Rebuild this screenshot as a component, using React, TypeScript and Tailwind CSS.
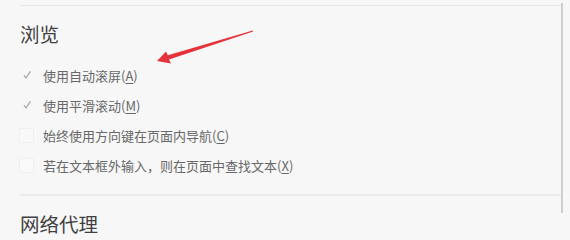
import React from 'react';

type Option = {
  label: string;
  key: string;
  checked: boolean;
};

const options: Option[] = [
  { label: '使用自动滚屏', key: 'A', checked: true },
  { label: '使用平滑滚动', key: 'M', checked: true },
  { label: '始终使用方向键在页面内导航', key: 'C', checked: false },
  { label: '若在文本框外输入，则在页面中查找文本', key: 'X', checked: false },
];

function CheckMark() {
  return (
    <svg width="14" height="14" viewBox="0 0 14 14" fill="none">
      <path d="M4.2 7.6 L6 10 L10.2 3.6" stroke="#a0a0a0" strokeWidth="1.1" strokeLinecap="round" strokeLinejoin="round" />
    </svg>
  );
}

function OptionRow({ option }: { option: Option }) {
  return (
    <label className="flex h-[30px] items-center">
      {option.checked ? (
        <span className="flex h-[14px] w-[14px] items-center justify-center">
          <CheckMark />
        </span>
      ) : (
        <span className="h-[15px] w-[15px] -ml-px rounded-[1px] border border-[#efefef] bg-[#f9f9f9]" />
      )}
      <span className="ml-[9px] text-[13px] leading-none text-[#686868]">
        {option.label}(<span className="underline underline-offset-2">{option.key}</span>)
      </span>
    </label>
  );
}

// Red annotation arrow pointing at the first option
function Arrow() {
  return (
    <svg className="pointer-events-none absolute left-0 top-0" width="570" height="240" viewBox="0 0 570 240">
      <polygon
        points="157,61 171,63.5 169,59.5 253.2,31.6 252.8,30.4 167.8,55.3 166,51.5"
        fill="#e5323b"
        style={{ filter: 'blur(0.4px)' }}
      />
    </svg>
  );
}

export default function App() {
  return (
    <div
      className="relative flex h-[240px] w-[570px] overflow-hidden bg-[#f7f7f7]"
      style={{ fontFamily: '"Noto Sans CJK SC", "Noto Sans", sans-serif' }}
    >
      <div className="ml-[20px] w-[541px]">
        <div className="mt-[5px] h-px bg-[#e6e6e6]" />

        <h2 className="mt-[15px] text-[19.5px] leading-[26px] text-[#404040]">浏览</h2>

        <div className="mt-[13px]">
          {options.map((option) => (
            <OptionRow key={option.key} option={option} />
          ))}
        </div>

        <div className="mt-[14px] h-[2px] bg-[#ebebeb]" />

        <h2 className="mt-[15px] text-[19.5px] leading-[26px] text-[#404040]">网络代理</h2>
      </div>

      <div className="mt-[3px] h-[210px] w-[2px] bg-[#cfcfcf]" />

      <Arrow />
    </div>
  );
}
